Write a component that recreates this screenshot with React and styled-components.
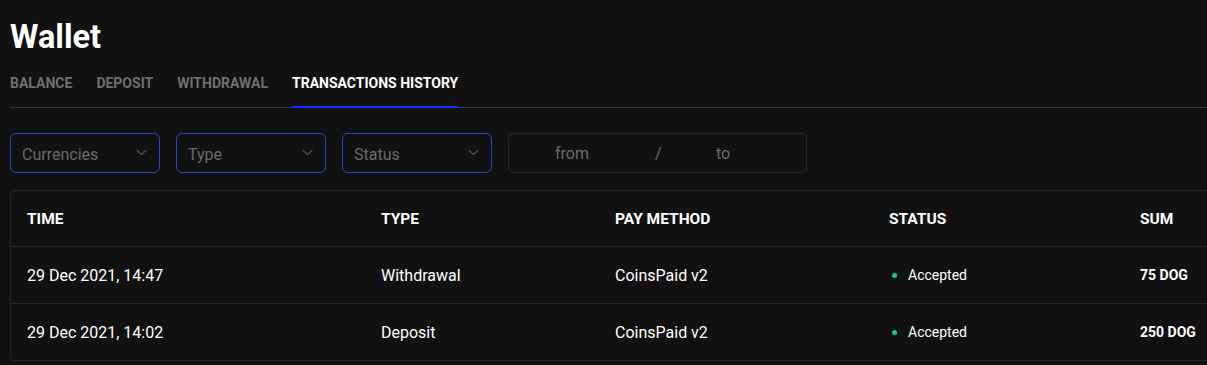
import React from "react";
import styled, { createGlobalStyle } from "styled-components";

const GlobalStyle = createGlobalStyle`
  html, body {
    margin: 0;
    background: #111111;
    overflow: hidden;
  }
  body {
    font-family: Roboto, "Liberation Sans", sans-serif;
    color: #ffffff;
  }
`;

const tabs = ["Balance", "Deposit", "Withdrawal", "Transactions history"];
const filters = ["Currencies", "Type", "Status"];
const rows = [
  { time: "29 Dec 2021, 14:47", type: "Withdrawal", method: "CoinsPaid v2", status: "Accepted", sum: "75 DOG" },
  { time: "29 Dec 2021, 14:02", type: "Deposit", method: "CoinsPaid v2", status: "Accepted", sum: "250 DOG" },
];

const Chevron = () => (
  <svg width="11" height="7" viewBox="0 0 11 7" fill="none">
    <path d="M1 1.2L5.5 5.5 10 1.2" stroke="#4e4e4e" strokeWidth="1.3" strokeLinecap="round" strokeLinejoin="round" />
  </svg>
);

const App = () => (
  <Page>
    <GlobalStyle />
    <Title>Wallet</Title>
    <Tabs>
      {tabs.map((t, i) => (
        <Tab key={t} active={i === 3}>{t}</Tab>
      ))}
    </Tabs>
    <Filters>
      {filters.map((f) => (
        <Select key={f}>
          <span>{f}</span>
          <Chevron />
        </Select>
      ))}
      <DateRange>
        <span>from</span>
        <span>/</span>
        <span>to</span>
      </DateRange>
    </Filters>
    <Table>
      <Row head>
        <div>Time</div>
        <div>Type</div>
        <div>Pay method</div>
        <div>Status</div>
        <div>Sum</div>
      </Row>
      {rows.map((r) => (
        <Row key={r.time}>
          <div>{r.time}</div>
          <div>{r.type}</div>
          <div>{r.method}</div>
          <Status>{r.status}</Status>
          <Sum>{r.sum}</Sum>
        </Row>
      ))}
    </Table>
  </Page>
);

const Page = styled.div`
  padding: 18px 0 0 10px;
  width: 1260px;
`;

const Title = styled.h1`
  margin: 0;
  font-size: 32.5px;
  font-weight: 700;
  line-height: 38px;
`;

const Tabs = styled.div`
  display: flex;
  gap: 24px;
  margin-top: 19px;
  border-bottom: 1px solid #3a3a3a;
  width: 1197px;
`;

const Tab = styled.div`
  font-size: 14px;
  font-weight: 700;
  text-transform: uppercase;
  color: ${(p) => (p.active ? "#ffffff" : "#6f6f6f")};
  padding-bottom: 15px;
  margin-bottom: -1px;
  border-bottom: 2px solid ${(p) => (p.active ? "#0a2eff" : "transparent")};
  line-height: 16px;
`;

const Filters = styled.div`
  display: flex;
  gap: 16px;
  margin-top: 25px;
`;

const Select = styled.div`
  box-sizing: border-box;
  width: 150px;
  height: 40px;
  border: 1px solid #2548c4;
  border-radius: 6px;
  display: flex;
  align-items: center;
  justify-content: space-between;
  padding: 2px 12px 0 11px;
  font-size: 16px;
  color: #6a6a6a;

  svg {
    margin-top: -3px;
  }
`;

const DateRange = styled.div`
  box-sizing: border-box;
  width: 299px;
  height: 40px;
  border: 1px solid #272727;
  border-radius: 6px;
  display: grid;
  grid-template-columns: 100px 61px 1fr;
  align-items: center;
  padding: 1px 0 0 46px;
  font-size: 16px;
  color: #6a6a6a;
`;

const Table = styled.div`
  margin-top: 17px;
  width: 1240px;
  border: 1px solid #262626;
  border-radius: 4px;
`;

const Row = styled.div`
  display: grid;
  grid-template-columns: 354px 234px 274px 251px 1fr;
  align-items: center;
  height: ${(p) => (p.head ? "55px" : "56px")};
  padding-left: 16px;
  font-size: ${(p) => (p.head ? "15.5px" : "16px")};
  font-weight: ${(p) => (p.head ? 700 : 400)};
  text-transform: ${(p) => (p.head ? "uppercase" : "none")};
  & + & {
    border-top: 1px solid #262626;
  }
`;

const Status = styled.div`
  display: flex;
  align-items: center;
  gap: 11px;
  font-size: 14px;
  padding-left: 3px;
  &::before {
    content: "";
    width: 5px;
    height: 5px;
    border-radius: 50%;
    background: #12c98c;
  }
`;

const Sum = styled.div`
  font-size: 14px;
  font-weight: 700;
`;

export default App;
